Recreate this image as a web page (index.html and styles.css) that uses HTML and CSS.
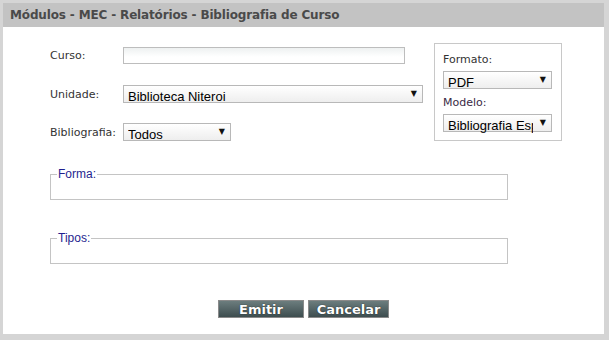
FILE: index.html
```html
<!DOCTYPE html>
<html lang="pt">
<head>
	<meta charset="utf-8">
	<title>Bibliografia de Curso</title>
	<link rel="stylesheet" href="styles.css">
</head>
<body>
	<div id="janela">
		<div class="titulo">Módulos - MEC - Relatórios - Bibliografia de Curso</div>

		<div class="corpo">
			<div class="topo">
				<div class="campos">
					<div class="linha linha-curso">
						<label>Curso:</label>
						<input type="text" class="texto">
					</div>
					<div class="linha linha-unidade">
						<label>Unidade:</label>
						<div class="combo combo-unidade">
							<select><option>Biblioteca Niteroi</option></select>
						</div>
					</div>
					<div class="linha">
						<label>Bibliografia:</label>
						<div class="combo combo-biblio">
							<select><option>Todos</option></select>
						</div>
					</div>
				</div>

				<div class="opcoes">
					<label>Formato:</label>
					<div class="combo combo-lado">
						<select><option>PDF</option></select>
					</div>
					<label class="modelo">Modelo:</label>
					<div class="combo combo-lado">
						<select><option>Bibliografia Especifica</option></select>
					</div>
				</div>
			</div>

			<fieldset class="grupo grupo-forma">
				<legend>Forma:</legend>
			</fieldset>

			<fieldset class="grupo grupo-tipos">
				<legend>Tipos:</legend>
			</fieldset>

			<div class="botoes">
				<button type="button" class="btn btn-emitir">Emitir</button>
				<button type="button" class="btn btn-cancelar">Cancelar</button>
			</div>
		</div>
	</div>
</body>
</html>
```

FILE: styles.css
```css
*{
	margin: 0px;
	padding: 0px;
	box-sizing: border-box;
}
body{
	background-color: #FFF;
	font-family: "DejaVu Sans", Verdana, sans-serif;
}
#janela{
	width: 609px;
	height: 340px;
	border-style: solid;
	border-color: #d5d5d5;
	border-width: 3px 5px 6px 3px;
	background-color: #FFF;
	overflow: hidden;
}
.titulo{
	height: 24px;
	background-color: #c3c3c3;
	color: #4a4a4a;
	font-weight: bold;
	font-size: 12px;
	letter-spacing: -0.15px;
	line-height: 24px;
	padding-left: 7px;
}
.corpo{
	padding: 16px 0px 0px 47px;
}
.topo{
	display: flex;
}
.campos{
	width: 384px;
	padding-top: 3px;
}
.linha{
	display: flex;
	align-items: center;
	height: 18px;
}
.linha-curso{
	margin-bottom: 21px;
}
.linha-unidade{
	margin-bottom: 20px;
}
.linha label{
	min-width: 73px;
	font-size: 11px;
	color: #333;
}
.texto{
	width: 282px;
	height: 17px;
	border: 1px solid #bdbdbd;
	background: linear-gradient(#eef1f1, #FFF 60%);
}
.combo{
	position: relative;
	height: 18px;
	border: 1px solid #b8b8b8;
	background: linear-gradient(#FFF, #eeeeee);
}
.combo select{
	appearance: none;
	-webkit-appearance: none;
	border: none;
	background: transparent;
	width: 100%;
	height: 16px;
	padding: 0px 18px 1px 4px;
	font-family: "Liberation Sans", Arial, sans-serif;
	font-size: 13px;
	line-height: 14px;
	color: #000;
	outline: none;
}
.combo::after{
	content: "▼";
	position: absolute;
	right: 5px;
	top: 3px;
	font-size: 8px;
	color: #111;
	pointer-events: none;
}
.combo-unidade{
	width: 300px;
}
.combo-biblio{
	width: 108px;
}
.opcoes{
	width: 128px;
	height: 98px;
	border: 1px solid #c8c8c8;
	padding: 8px 0px 0px 8px;
}
.opcoes label{
	display: block;
	font-size: 11px;
	color: #333;
	height: 15px;
	line-height: 15px;
	margin-bottom: 4px;
}
.opcoes .modelo{
	color: #3a2a45;
	margin-top: 6px;
}
.combo-lado{
	width: 109px;
}
.grupo{
	width: 458px;
	height: 33px;
	border: 1px solid #c4c4c4;
	padding: 0px 6px;
	margin-top: 26px;
}
.grupo legend{
	padding: 0px 1px;
	font-family: "Liberation Sans", Arial, sans-serif;
	font-size: 12px;
	color: #1f1f8f;
}
.grupo-tipos{
	margin-top: 31px;
}
.botoes{
	display: flex;
	justify-content: center;
	gap: 4px;
	margin: 36px 0px 0px -47px;
}
.btn{
	height: 18px;
	border: 1px solid #8a8a8a;
	background: linear-gradient(#6c7d7e, #3d4d4f);
	color: #FFF;
	font-family: "DejaVu Sans", Verdana, sans-serif;
	font-weight: bold;
	font-size: 13px;
	line-height: 15px;
	text-shadow: 0px 0px 1px #000;
	cursor: pointer;
}
.btn-emitir{
	width: 86px;
}
.btn-cancelar{
	width: 81px;
}
```
